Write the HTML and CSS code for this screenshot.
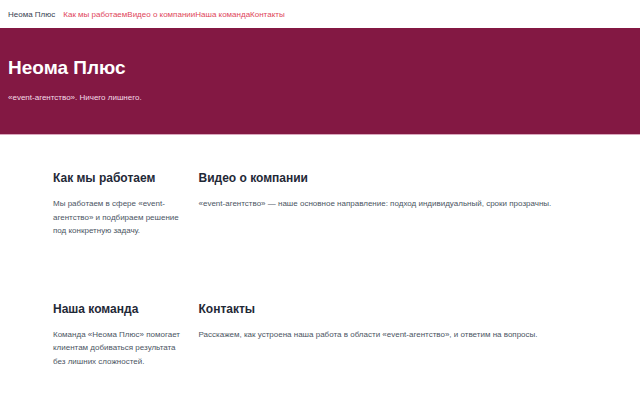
FILE: index.html
```html
<!DOCTYPE html>
<html lang="ru">
<head>
<meta charset="utf-8">
<title>Неома Плюс</title>
<link rel="stylesheet" href="styles.css">
</head>
<body>
<header class="topbar">
  <span class="brand">Неома Плюс</span>
  <nav class="links">
    <a href="#how">Как мы работаем</a><a href="#video">Видео о компании</a><a href="#team">Наша команда</a><a href="#contacts">Контакты</a>
  </nav>
</header>
<section class="hero">
  <h1>Неома Плюс</h1>
  <p>«event-агентство». Ничего лишнего.</p>
</section>
<main class="content">
  <div class="item" id="how">
    <h2>Как мы работаем</h2>
    <p>Мы работаем в сфере «event-агентство» и подбираем решение под конкретную задачу.</p>
  </div>
  <div class="item" id="video">
    <h2>Видео о компании</h2>
    <p>«event-агентство» — наше основное направление: подход индивидуальный, сроки прозрачны.</p>
  </div>
  <div class="item" id="team">
    <h2>Наша команда</h2>
    <p>Команда «Неома Плюс» помогает клиентам добиваться результата без лишних сложностей.</p>
  </div>
  <div class="item" id="contacts">
    <h2>Контакты</h2>
    <p>Расскажем, как устроена наша работа в области «event-агентство», и ответим на вопросы.</p>
  </div>
</main>
</body>
</html>
```
FILE: styles.css
```css
* { box-sizing: border-box; }
html, body { margin: 0; padding: 0; background: #ffffff; }
body { font-family: "Liberation Sans", Arial, sans-serif; color: #1f2937; }
.topbar {
  height: 28px;
  display: flex;
  align-items: center;
  gap: 8px;
  padding: 0 8px;
  font-size: 8px;
}
.brand { color: #374151; }
.links { display: flex; }
.links a { color: #e0465a; text-decoration: none; }
.hero {
  background: #831843;
  color: #ffffff;
  padding: 28px 8px 0;
  height: 107px;
  border-bottom: 1px solid #d9a7bd;
}
.hero h1 { margin: 0; font-size: 19px; font-weight: 700; line-height: 24px; }
.hero p { margin: 13px 0 0; font-size: 8px; color: #f3dbe6; }
.content {
  display: grid;
  grid-template-columns: 1fr 3fr;
  column-gap: 16px;
  row-gap: 63px;
  margin: 0 53px;
  padding-top: 35px;
}
.item h2 { margin: 0; font-size: 12px; font-weight: 700; color: #1f2937; line-height: 16px; }
.item p { margin: 11px 0 0; font-size: 8px; line-height: 13.5px; color: #4b5563; }
```
